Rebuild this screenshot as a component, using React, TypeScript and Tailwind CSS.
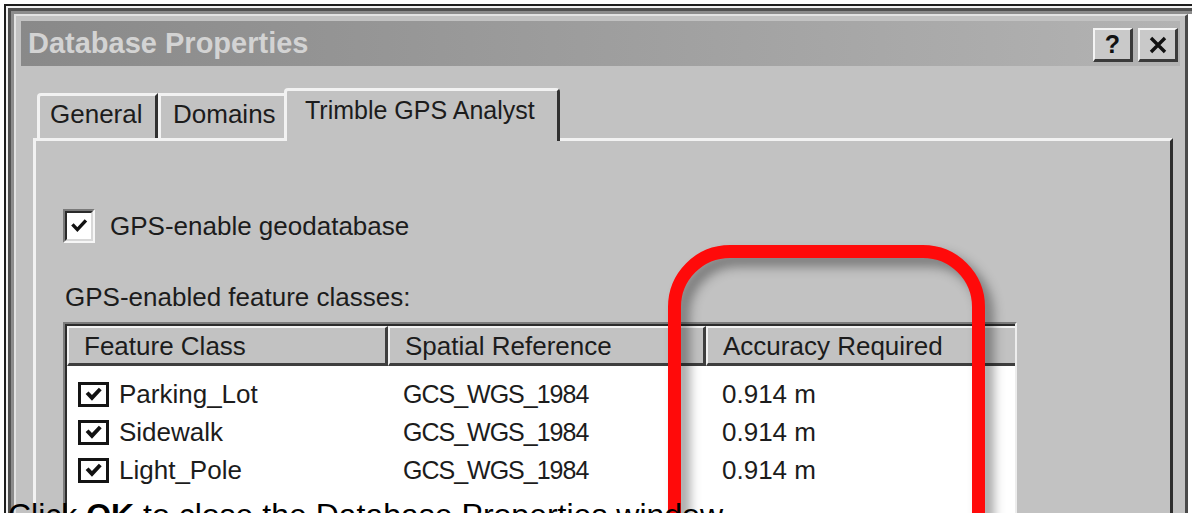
const cols = ['w-[321px]', 'w-[318px]', 'w-[276px]']

const rows = [
  { name: 'Parking_Lot', ref: 'GCS_WGS_1984', acc: '0.914 m' },
  { name: 'Sidewalk', ref: 'GCS_WGS_1984', acc: '0.914 m' },
  { name: 'Light_Pole', ref: 'GCS_WGS_1984', acc: '0.914 m' },
]

function Tick({ weight = 1.9 }: { weight?: number }) {
  return (
    <svg viewBox="0 0 10 10" className="w-full h-full">
      <path d="M2 4.8 L4.1 7 L8.2 2.6" fill="none" stroke="#111" strokeWidth={weight} strokeLinecap="square" />
    </svg>
  )
}

// sunken 3d checkbox used on the tab page
function CheckBox() {
  return (
    <div className="w-[32px] h-[34px] border-t-2 border-l-2 border-t-[#7a7a7a] border-l-[#7a7a7a] border-b-2 border-r-2 border-b-[#f6f6f6] border-r-[#f6f6f6]">
      <div className="w-full h-full border-t-2 border-l-2 border-t-[#2a2a2a] border-l-[#2a2a2a] border-b-2 border-r-2 border-b-[#d8d8d8] border-r-[#d8d8d8] bg-white p-[3px]">
        <Tick />
      </div>
    </div>
  )
}

// flat state-image checkbox used in the list
function ListCheck() {
  return (
    <div className="w-[31px] h-[25px] border-[3px] border-[#141414] bg-white px-[3px] py-[1px]">
      <Tick weight={2.3} />
    </div>
  )
}

function TitleButton({ children }: { children: React.ReactNode }) {
  return (
    <div className="w-[40px] h-[34px] bg-[#c9c9c9] border-t-2 border-l-2 border-t-[#f4f4f4] border-l-[#f4f4f4] border-b-[3px] border-r-[3px] border-b-[#3a3a3a] border-r-[#3a3a3a] flex items-center justify-center">
      {children}
    </div>
  )
}

function HeaderCell({ label, width }: { label: string; width: string }) {
  return (
    <div className={`${width} h-full border-t-2 border-l-2 border-t-[#f2f2f2] border-l-[#f2f2f2] border-r-[3px] border-b-[3px] border-r-[#3e3e3e] border-b-[#3e3e3e] pl-[15px] leading-[36px]`}>
      {label}
    </div>
  )
}

export default function App() {
  return (
    <div className="relative w-[1192px] h-[513px] overflow-hidden bg-white text-[#1c1c1c] font-['Liberation_Sans',Arial,sans-serif]">
      {/* window frame */}
      <div className="pl-[4px] pt-[4px]">
        <div className="border-t-2 border-l-2 border-[#1e1e1e]">
          <div className="border-t-2 border-l-2 border-[#f2f2f2]">
            <div className="border-t-[3px] border-l-[3px] border-[#505050]">
              <div className="border-t-[3px] border-l-[3px] border-[#8c8c8c]">
                <div className="mr-[4px] h-[520px] bg-[#c2c2c2] border-t-2 border-l-2 border-t-[#e2e2e2] border-l-[#e2e2e2] border-r-[3px] border-r-[#4a4a4a] pt-[5px] pl-[5px] pr-[5px]">
                  {/* title bar */}
                  <div className="h-[45px] flex items-start bg-linear-to-r from-[#898989] to-[#b3b3b3]">
                    <span className="pl-[7px] text-[29px] leading-[45px] font-bold text-[#d3d3d3]">Database Properties</span>
                    <div className="ml-auto mt-[7px] mr-[2px] flex gap-[5px]">
                      <TitleButton>
                        <span className="text-[25px] font-bold text-[#111] leading-none">?</span>
                      </TitleButton>
                      <TitleButton>
                        <svg viewBox="0 0 20 18" className="w-[20px] h-[18px]">
                          <path d="M3 2 L17 16 M17 2 L3 16" stroke="#111" strokeWidth="3.4" />
                        </svg>
                      </TitleButton>
                    </div>
                  </div>

                  {/* dialog body */}
                  <div className="pl-[12px] pr-[7px] pt-[22px]">
                    {/* tabs */}
                    <div className="relative z-10 flex items-end h-[50px] pl-[4px] text-[26px]">
                      <div className="w-[121px] h-[45px] rounded-tl-[4px] border-t-[3px] border-l-[3px] border-t-[#f2f2f2] border-l-[#f2f2f2] border-r-[3px] border-r-[#303030] pl-[10px] leading-[36px]">
                        General
                      </div>
                      <div className="w-[128px] h-[45px] border-t-[3px] border-l-[3px] border-t-[#f2f2f2] border-l-[#f2f2f2] pl-[12px] leading-[36px]">
                        Domains
                      </div>
                      <div className="-ml-[2px] -mb-[3px] w-[276px] h-[53px] bg-[#c2c2c2] rounded-t-[4px] border-t-[3px] border-l-[3px] border-t-[#f2f2f2] border-l-[#f2f2f2] border-r-[3px] border-r-[#303030] pl-[18px] leading-[38px] text-[25px]">
                        Trimble GPS Analyst
                      </div>
                    </div>

                    {/* tab page */}
                    <div className="h-[400px] border-t-[3px] border-l-[3px] border-t-[#f2f2f2] border-l-[#f2f2f2] border-r-[3px] border-r-[#2e2e2e] pl-[27px] pt-[68px] text-[26px]">
                      <div className="flex items-center gap-[15px] h-[34px]">
                        <CheckBox />
                        <span className="leading-[30px]">GPS-enable geodatabase</span>
                      </div>

                      <div className="mt-[39px] leading-[30px] pl-[2px]">GPS-enabled feature classes:</div>

                      {/* list view */}
                      <div className="mt-[10px] w-[954px] h-[220px] border-t-2 border-l-2 border-[#7c7c7c] border-r-2 border-r-[#ededed]">
                        <div className="h-full border-t-2 border-l-2 border-[#2c2c2c] bg-white">
                          <div className="flex h-[40px] bg-[#c2c2c2]">
                            <HeaderCell label="Feature Class" width={cols[0]} />
                            <HeaderCell label="Spatial Reference" width={cols[1]} />
                            <HeaderCell label="Accuracy Required" width={cols[2]} />
                            <div className="flex-1 h-full border-t-2 border-l-2 border-[#f2f2f2] border-b-[3px] border-b-[#3e3e3e]" />
                          </div>
                          <div className="pt-[9px]">
                            {rows.map((r) => (
                              <div key={r.name} className="flex h-[38px] items-center leading-[38px]">
                                <div className={`${cols[0]} flex items-center gap-[10px] pl-[11px]`}>
                                  <ListCheck />
                                  <span>{r.name}</span>
                                </div>
                                <div className={`${cols[1]} pl-[15px] text-[25px] tracking-[-1px]`}>{r.ref}</div>
                                <div className={`${cols[2]} pl-[16px]`}>{r.acc}</div>
                              </div>
                            ))}
                          </div>
                        </div>
                      </div>
                    </div>
                  </div>
                </div>
              </div>
            </div>
          </div>
        </div>
      </div>

      {/* red callout round the accuracy column */}
      <div className="absolute left-[668px] top-[245px] w-[317px] h-[420px] rounded-[62px] border-[13px] border-[#ff0a0a] drop-shadow-[8px_8px_6px_rgba(0,0,0,0.4)]" />

      {/* caption text below the screenshot */}
      <div className="absolute left-[8px] top-[499px] text-[32px] leading-[32px] text-black whitespace-nowrap">
        Click <b>OK</b> to close the Database Properties window.
      </div>
    </div>
  )
}
